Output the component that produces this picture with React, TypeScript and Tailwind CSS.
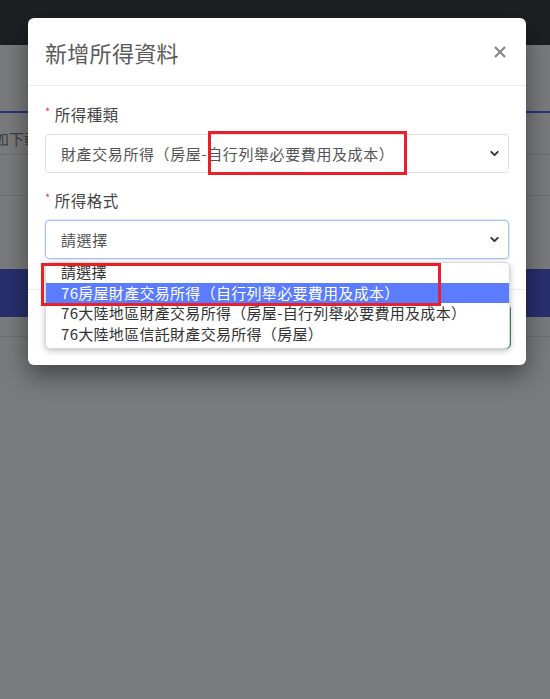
import { ChevronDown } from "lucide-react";

const font = { fontFamily: '"Noto Sans CJK TC", "Noto Sans", sans-serif' };

const options = [
  "請選擇",
  "76房屋財產交易所得（自行列舉必要費用及成本）",
  "76大陸地區財產交易所得（房屋-自行列舉必要費用及成本）",
  "76大陸地區信託財產交易所得（房屋）",
];

function Label({ text }: { text: string }) {
  return (
    <div className="flex h-[22px] items-center text-[15.5px] leading-[22px] tracking-[0.5px] text-[#444]">
      <span className="mr-[4px] -mt-[6px] text-[11px] text-[#e53935]">*</span>
      {text}
    </div>
  );
}

export default function App() {
  return (
    <div className="relative h-[699px] w-[550px] overflow-hidden bg-[#797a7c]" style={font}>
      {/* page behind the backdrop */}
      <div className="h-[45px] bg-[#1e1f23]"></div>
      <div className="h-[66px]"></div>
      <div className="h-[2px] bg-[#2b2f88]"></div>
      <div className="flex h-[42px] items-end border-b border-[#6c6d70] pb-[4px]">
        <span className="-ml-[6px] text-[15px] text-[#3d3d3f]">如下載</span>
      </div>
      <div className="h-[41px] border-b border-[#6c6d70]"></div>
      <div className="h-[73px]"></div>
      <div className="h-[48px] bg-[#272f6e]"></div>
      <div className="h-[20px] border-b border-[#6c6d70]"></div>

      {/* modal */}
      <div className="absolute left-[28px] top-[18px] w-[498px] rounded-[6px] bg-white shadow-[0_10px_25px_rgba(0,0,0,0.45)]">
        <div className="flex h-[68px] items-center justify-between border-b border-[#e9ecef] pl-[17px] pr-[20px]">
          <span className="text-[22px] leading-none tracking-[0.3px] text-[#5a5a5a]">新增所得資料</span>
          <svg width="12" height="12" viewBox="0 0 12 12" className="text-[#8a8a8a]">
            <path d="M1 1L11 11M11 1L1 11" stroke="currentColor" strokeWidth="2.4" />
          </svg>
        </div>

        <div className="px-[17px] pt-[17px] pb-[30px]">
          <Label text="所得種類" />
          <div className="mt-[9px] flex h-[39px] items-center justify-between rounded-[4px] border border-[#dcdfe3] pl-[15px] pr-[7px] text-[15px] tracking-[0.6px] text-[#555]">
            <span className="pt-[2px]">財產交易所得（房屋-自行列舉必要費用及成本）</span>
            <ChevronDown size={13} strokeWidth={3.5} className="text-[#333]" />
          </div>

          <div className="mt-[16px]">
            <Label text="所得格式" />
          </div>
          <div className="mt-[9px] flex h-[39px] items-center justify-between rounded-[4px] border border-[#a9c1f5] pl-[15px] pr-[7px] text-[15px] tracking-[0.6px] text-[#555] shadow-[0_0_0_1px_rgba(140,170,240,0.25)]">
            <span className="pt-[2px]">請選擇</span>
            <ChevronDown size={13} strokeWidth={3.5} className="text-[#333]" />
          </div>
        </div>

        <div className="flex h-[76px] justify-end border-t border-[#e9ecef] pr-[15px] pt-[14px]">
          <div className="h-[45px] w-[90px] rounded-[5px] border border-[#2e8b57] bg-[#198754]"></div>
        </div>
      </div>

      {/* open dropdown list */}
      <div className="absolute left-[45px] top-[262px] h-[87px] w-[465px] overflow-hidden rounded-[5px] border border-[#d8d8d8] bg-white text-[15px] leading-[20px] tracking-[0.3px] text-[#333] shadow-[0_2px_6px_rgba(0,0,0,0.25)]">
        <div className="-mt-[1px]">
          {options.map((o, i) => (
            <div
              key={i}
              className={
                i === 1
                  ? "h-[20.5px] bg-[#5b7cfe] pl-[15px] text-white"
                  : "h-[20.5px] pl-[15px]"
              }
            >
              {o}
            </div>
          ))}
        </div>
      </div>

      {/* red annotation boxes */}
      <div className="absolute left-[208px] top-[131px] h-[44px] w-[199px] border-[3px] border-[#e8202a]"></div>
      <div className="absolute left-[41px] top-[263px] h-[43px] w-[400px] border-[3px] border-[#e8202a]"></div>
    </div>
  );
}
